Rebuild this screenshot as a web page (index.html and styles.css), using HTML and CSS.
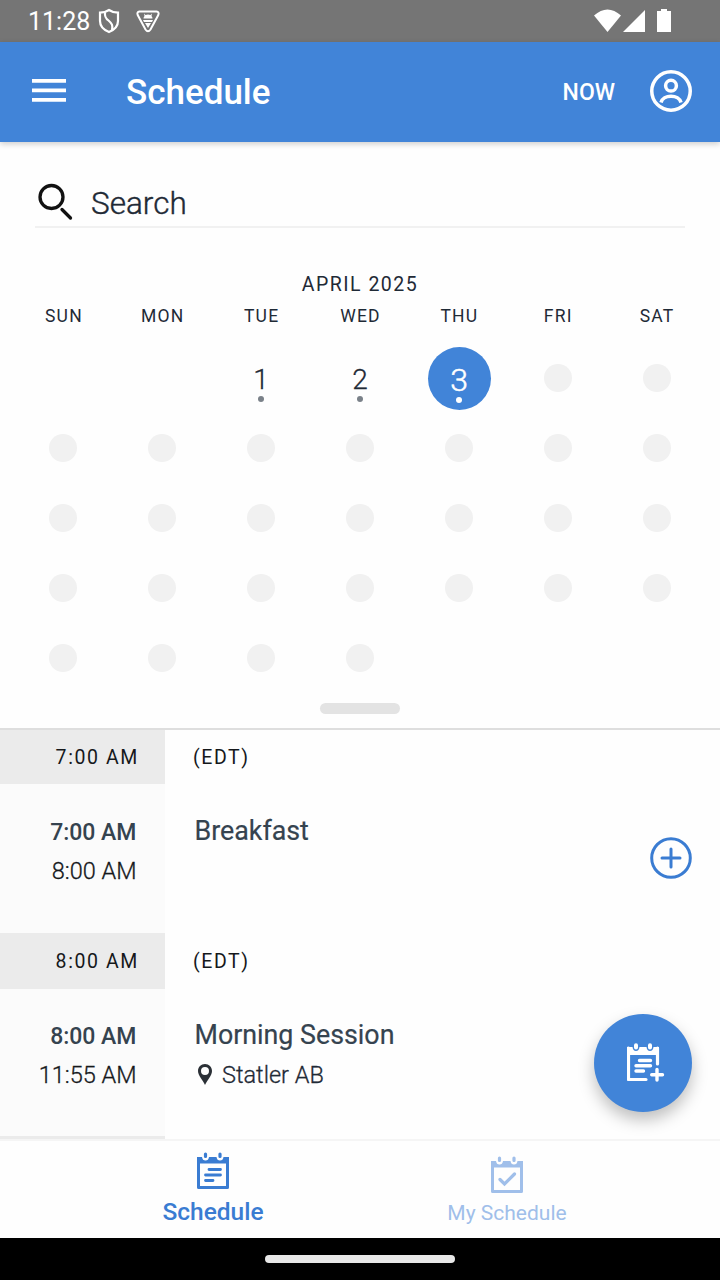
FILE: index.html
```html
<!DOCTYPE html>
<html lang="en">
<head>
    <meta charset="UTF-8">
    <meta name="viewport" content="width=device-width, initial-scale=1.0">
    <title>Schedule</title>
    <link rel="stylesheet" href="styles.css">
</head>
<body>

    <div class="status-bar">
        <span class="clock">11:28</span>
        <svg class="shield" width="22" height="26" viewBox="0 0 22 26" fill="none" stroke="#fff" stroke-width="2.200">
            <path d="M11 2 C8 4 5 4.700 2 4.700 V13 C2 18 6 22 11 24 C16 22 20 18 20 13 V4.700 C17 4.700 14 4 11 2 Z"/>
            <path d="M7 4.500 C6.500 9 8 10.500 10.500 12.500 C14 15.500 15 17.500 14 22"/>
        </svg>
        <svg class="badge" width="24" height="24" viewBox="0 0 24 24">
            <path d="M3.500 2.500 H20.500 Q23.500 3 22.300 6 L14.500 20.500 Q12 24 9.500 20.500 L1.700 6 Q.5 3 3.500 2.500 Z" fill="none" stroke="#fff" stroke-width="2"/>
            <path d="M8 4.500 L9.500 6 Q12 5 14.500 6 L16 4.500 L15.500 7 Q16.500 8 16.500 9.500 H7.500 Q7.500 8 8.500 7 Z M7 11 H17 L16 13 H8 Z M9 14 H15 L12 19 Z" fill="#fff"/>
        </svg>
        <svg class="signals" width="80" height="26" viewBox="0 0 80 26" fill="#fff">
            <path d="M0 7.500 Q13.500 -4.500 27 7.500 L13.500 24 Z"/>
            <path d="M29 24 L51 2 V24 Z"/>
            <path d="M67 1 H73 V3 H77 V24 H63 V3 H67 Z"/>
        </svg>
    </div>

    <header class="app-bar">
        <svg width="34" height="24" viewBox="0 0 34 24" fill="#fff">
            <path d="M0 0 H34 V3.800 H0 Z M0 9.500 H34 V13.300 H0 Z M0 19 H34 V22.800 H0 Z"/>
        </svg>
        <h1>Schedule</h1>
        <span class="now">NOW</span>
        <svg width="42" height="42" viewBox="0 0 42 42" fill="none" stroke="#fff" stroke-width="3.500">
            <circle cx="21" cy="21" r="19.250"/>
            <circle cx="21" cy="15.700" r="5.400"/>
            <path d="M11 32.500 C13 24 29 24 31 32.500"/>
        </svg>
    </header>

    <div class="search">
        <svg width="36" height="38" viewBox="0 0 36 38" fill="none" stroke="#111" stroke-width="3.300">
            <circle cx="13.500" cy="14" r="11.500"/>
            <path d="M24 26.500 L32.500 35" stroke-linecap="round"/>
        </svg>
        <span>Search</span>
    </div>

    <div class="calendar">
        <h2>APRIL 2025</h2>
        <div class="week weekdays">
            <span>SUN</span><span>MON</span><span>TUE</span><span>WED</span><span>THU</span><span>FRI</span><span>SAT</span>
        </div>
        <div class="week">
            <span></span><span></span>
            <span class="day">1</span><span class="day">2</span><span class="day selected">3</span>
            <i class="off"></i><i class="off"></i>
        </div>
        <div class="week"><i class="off"></i><i class="off"></i><i class="off"></i><i class="off"></i><i class="off"></i><i class="off"></i><i class="off"></i></div>
        <div class="week"><i class="off"></i><i class="off"></i><i class="off"></i><i class="off"></i><i class="off"></i><i class="off"></i><i class="off"></i></div>
        <div class="week"><i class="off"></i><i class="off"></i><i class="off"></i><i class="off"></i><i class="off"></i><i class="off"></i><i class="off"></i></div>
        <div class="week"><i class="off"></i><i class="off"></i><i class="off"></i><i class="off"></i></div>
        <div class="handle"></div>
    </div>

    <main class="agenda">
        <div class="hour">
            <span class="hour-time">7:00 AM</span>
            <span class="zone">(EDT)</span>
        </div>
        <div class="event">
            <div class="times"><b>7:00 AM</b><span>8:00 AM</span></div>
            <div class="details"><h3>Breakfast</h3></div>
            <svg class="add" width="42" height="42" viewBox="0 0 42 42" fill="none" stroke="#3a7cd2" stroke-width="3">
                <circle cx="21" cy="21" r="19.300"/>
                <path d="M21 12 V30 M12 21 H30" stroke-linecap="round"/>
            </svg>
        </div>
        <div class="hour second">
            <span class="hour-time">8:00 AM</span>
            <span class="zone">(EDT)</span>
        </div>
        <div class="event last">
            <div class="times"><b>8:00 AM</b><span>11:55 AM</span></div>
            <div class="details">
                <h3>Morning Session</h3>
                <p>
                    <svg width="14" height="21" viewBox="0 0 14 21">
                        <path d="M7 0 C3 0 0 3 0 7 C0 12 5 16 7 21 C9 16 14 12 14 7 C14 3 11 0 7 0 Z M7 3 A4 4 0 1 1 7 11 A4 4 0 1 1 7 3 Z" fill="#2b3036" fill-rule="evenodd"/>
                    </svg>
                    Statler AB
                </p>
            </div>
        </div>
        <div class="hour"><span class="hour-time"></span></div>

        <div class="fab">
            <svg width="38" height="40" viewBox="0 0 38 40" fill="none" stroke="#fff">
                <path d="M1.500 5 V36.500 H19 M30.500 5 V21" stroke-width="3.200" stroke-linecap="round" stroke-linejoin="round"/>
                <path d="M0 4 H5.500 Q6 8 9 8 Q12 8 12.500 4 H19.500 Q20 8 23 8 Q26 8 26.500 4 H32 V12 H0 Z" fill="#fff" stroke="none"/>
                <path d="M9 2.200 V4.500 M23 2.200 V4.500" stroke-width="4" stroke-linecap="round"/>
                <path d="M12.500 17.500 H23.500 M9 22.800 H23.500 M9 28 H16.500" stroke-width="3.400" stroke-linecap="round"/>
                <path d="M30 26.500 V37 M24.700 31.700 H35.500" stroke-width="3.400" stroke-linecap="round"/>
            </svg>
        </div>
    </main>

    <nav class="tabs">
        <div class="tab active">
            <svg width="32" height="38" viewBox="0 0 32 38" fill="none" stroke="currentColor">
                <path d="M1.500 6 V35.500 H30.500 V6" stroke-width="3" stroke-linejoin="round"/>
                <path d="M0 5 H5 Q5.500 8.500 8.500 8.500 Q11.500 8.500 12 5 H19.500 Q20 8.500 23 8.500 Q26 8.500 26.500 5 H32 V11.500 H0 Z" fill="currentColor" stroke="none"/>
                <path d="M8.500 2 V4.500 M23 2 V4.500" stroke-width="3.200" stroke-linecap="round"/>
                <path d="M12 17.500 H23.500 M8.500 23 H23.500 M8.500 28.500 H16" stroke-width="2.800" stroke-linecap="round"/>
            </svg>
            <span>Schedule</span>
        </div>
        <div class="tab">
            <svg width="32" height="38" viewBox="0 0 32 38" fill="none" stroke="currentColor">
                <path d="M1.500 6 V35.500 H30.500 V6" stroke-width="3" stroke-linejoin="round"/>
                <path d="M0 5 H5 Q5.500 8.500 8.500 8.500 Q11.500 8.500 12 5 H19.500 Q20 8.500 23 8.500 Q26 8.500 26.500 5 H32 V11.500 H0 Z" fill="currentColor" stroke="none"/>
                <path d="M8.500 2 V4.500 M23 2 V4.500" stroke-width="3.200" stroke-linecap="round"/>
                <path d="M9 23.500 L13.500 28 L23.500 18" stroke-width="3.200" stroke-linecap="round"/>
            </svg>
            <span>My Schedule</span>
        </div>
    </nav>

    <div class="system-nav"><div class="pill"></div></div>

</body>
</html>
```
FILE: styles.css
```css
* {
    box-sizing: border-box;
}
body {
    margin: 0;
    width: 720px;
    height: 1280px;
    overflow: hidden;
    display: flex;
    flex-direction: column;
    font-family: Roboto, sans-serif;
    background: #fefefe;
    color: #1f2a36;
}
svg {
    display: block;
    flex: none;
}
h1, h2, h3, p {
    margin: 0;
}
.status-bar {
    height: 42px;
    flex: none;
    display: flex;
    align-items: center;
    padding: 0 46px 0 28px;
    background: #757575;
    color: #fff;
}
.clock {
    font-size: 25px;
    width: 70px;
}
.badge {
    margin-left: 16px;
}
.signals {
    margin-left: auto;
}
.app-bar {
    height: 100px;
    flex: none;
    display: flex;
    align-items: center;
    padding: 0 28px 2px 32px;
    background: #4184d8;
    color: #fff;
    box-shadow: 0 2px 6px rgba(0, 0, 0, 0.2);
}
.app-bar h1 {
    margin-left: 60px;
    padding-top: 2px;
    font-size: 35px;
    font-weight: 500;
}
.now {
    margin-left: auto;
    margin-right: 35px;
    padding-top: 2px;
    font-size: 23px;
    font-weight: 500;
}
.search {
    height: 50px;
    flex: none;
    margin: 36px 35px 0;
    padding-left: 3px;
    display: flex;
    align-items: center;
    border-bottom: 2px solid #f1f1f1;
    font-size: 31.5px;
    font-weight: 300;
    -webkit-text-stroke: 0.4px;
}
.search span {
    margin-left: 17px;
    padding-top: 2px;
}
.calendar {
    height: 502px;
    flex: none;
    padding: 45px 13.5px 0;
    border-bottom: 2px solid #dedede;
}
.calendar h2 {
    font-size: 19.5px;
    line-height: 24px;
    font-weight: 400;
    letter-spacing: 1.5px;
    text-align: center;
}
.week {
    height: 70px;
    display: grid;
    grid-template-columns: repeat(7, 1fr);
    place-items: center;
}
.weekdays {
    height: 24px;
    margin: 7px 0 15px;
    padding-left: 1px;
    font-size: 17.5px;
    letter-spacing: 1.2px;
}
.off {
    width: 28px;
    height: 28px;
    border-radius: 50%;
    background: #f1f1f1;
}
.day {
    width: 63px;
    height: 63px;
    border-radius: 50%;
    display: flex;
    flex-direction: column;
    align-items: center;
    padding-top: 17px;
    font-size: 28px;
    line-height: 32px;
    font-weight: 300;
    -webkit-text-stroke: 0.3px;
}
.day::after {
    content: "";
    width: 6px;
    height: 6px;
    border-radius: 50%;
    background: #7a8189;
}
.selected {
    background: #4184d8;
    color: #fff;
    font-size: 32px;
    -webkit-text-stroke: 0.5px;
}
.selected::after {
    margin-top: 1px;
    background: #fff;
}
.handle {
    width: 80px;
    height: 11px;
    margin: 10px auto 0;
    border-radius: 6px;
    background: #e3e3e3;
}
.agenda {
    position: relative;
    height: 409px;
    flex: none;
    overflow: hidden;
}
.hour {
    height: 54px;
    display: flex;
    align-items: center;
    font-size: 19.5px;
    letter-spacing: 1.6px;
    color: #15181b;
}
.hour.second {
    height: 56px;
}
.hour-time {
    width: 165px;
    height: 100%;
    display: flex;
    align-items: center;
    justify-content: flex-end;
    padding-right: 26px;
    background: #ebebeb;
}
.zone {
    margin-left: 28px;
}
.event {
    height: 149px;
    display: flex;
}
.event.last {
    height: 147px;
}
.times {
    width: 165px;
    padding: 30px 28.5px 0 0;
    display: flex;
    flex-direction: column;
    background: #fbfbfb;
    text-align: right;
    font-size: 23.5px;
    line-height: 38px;
    font-weight: 300;
    color: #15181b;
}
.last .times {
    padding-top: 29px;
}
.times span,
.details p {
    -webkit-text-stroke: 0.3px;
}
.times b {
    font-size: 23px;
    font-weight: 500;
    color: #35434f;
}
.details {
    flex: 1;
    padding: 28px 0 0 29.5px;
}
.last .details {
    padding-top: 27px;
}
.details h3 {
    font-size: 26.8px;
    line-height: 38px;
    font-weight: 400;
    color: #35434f;
    -webkit-text-stroke: 0.2px;
}
.details p {
    display: flex;
    align-items: center;
    gap: 10.5px;
    padding: 1px 0 0 3px;
    font-size: 23.5px;
    line-height: 40px;
    font-weight: 300;
}
.details p svg {
    margin-top: -2px;
}
.add {
    margin: 53px 28px 0 0;
}
.fab {
    position: absolute;
    right: 28px;
    bottom: 27px;
    width: 98px;
    height: 98px;
    padding-left: 5px;
    border-radius: 50%;
    display: flex;
    align-items: center;
    justify-content: center;
    background: #4184d8;
    box-shadow: 0 8px 16px rgba(0, 0, 0, 0.25);
}
.tabs {
    height: 99px;
    flex: none;
    display: flex;
    justify-content: center;
    border-top: 2px solid #f5f5f5;
}
.tab {
    width: 294px;
    padding-top: 15px;
    display: flex;
    flex-direction: column;
    align-items: center;
    gap: 4px;
    font-size: 21px;
    line-height: 30px;
    color: #a0bfea;
}
.tab.active {
    padding-top: 11px;
    gap: 7px;
    font-size: 24.5px;
    font-weight: 500;
    color: #3a7cd2;
}
.system-nav {
    flex: 1;
    display: flex;
    align-items: center;
    justify-content: center;
    background: #000;
}
.pill {
    width: 190px;
    height: 8px;
    border-radius: 4px;
    background: #e8e8e8;
}
```
